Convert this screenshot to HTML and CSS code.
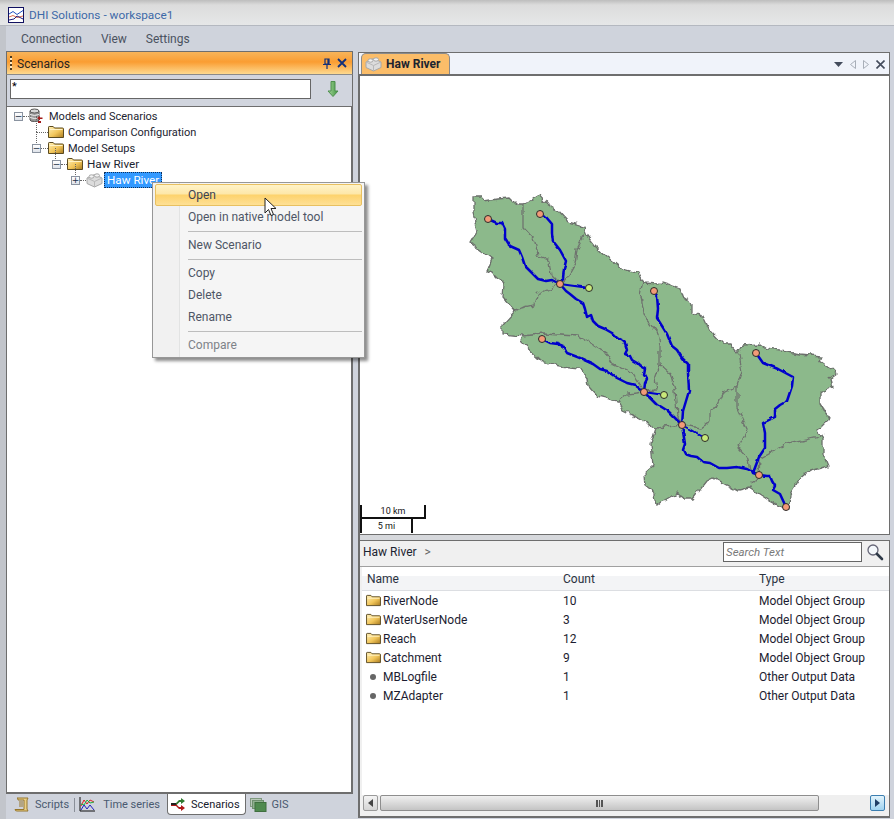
FILE: index.html
```html
<!DOCTYPE html>
<html lang="en">
<head>
  <meta charset="UTF-8">
  <meta name="viewport" content="width=device-width, initial-scale=1.0">
  <title>DHI Solutions - workspace1</title>
  <link rel="stylesheet" href="styles.css">
</head>
<body>
  <!-- shared icons -->
  <svg class="defs" width="0" height="0">
    <defs>
      <linearGradient id="folderFill" x1="0" y1="0" x2="1" y2="1">
        <stop offset="0" stop-color="#fff0b8"/>
        <stop offset="0.55" stop-color="#f2c65a"/>
        <stop offset="1" stop-color="#a87a20"/>
      </linearGradient>
      <linearGradient id="bottleGreen" x1="0" y1="0" x2="1" y2="0">
        <stop offset="0" stop-color="#a6d69a"/>
        <stop offset="1" stop-color="#3f9440"/>
      </linearGradient>
      <symbol id="folder" viewBox="0 0 16 14">
        <path d="M.5 12.500V2.200q0-.7.7-.7h4l1.300 1.500h8q1 0 1 1v8.500z" fill="url(#folderFill)" stroke="#5a4a20"/>
        <path d="M1.500 4.500h13" stroke="#fff3c8" fill="none"/>
      </symbol>
      <symbol id="brick" viewBox="0 0 17 16">
        <path d="M1 6l7.500-3.500L16 6v5.500L8.500 15 1 11.500z" fill="#dcdcdc" stroke="#a8a8a8"/>
        <path d="M1 6l7.500 3.500L16 6M8.500 9.500V15" fill="none" stroke="#b8b8b8"/>
        <ellipse cx="5.500" cy="4.500" rx="2.500" ry="1.700" fill="#f2f2f2" stroke="#a8a8a8"/>
        <ellipse cx="11" cy="3.500" rx="2.500" ry="1.700" fill="#f2f2f2" stroke="#a8a8a8"/>
      </symbol>
    </defs>
  </svg>

  <header class="titlebar">
    <svg class="app-icon" width="16" height="16" viewBox="0 0 16 16">
      <rect x=".5" y=".5" width="15" height="15" fill="#fff" stroke="#101060"/>
      <path d="M1 7l4-2.500 4 3 6-4" fill="none" stroke="#2050c0"/>
      <path d="M1 10l4-1.500 4 2 6-1.500" fill="none" stroke="#e07050"/>
      <path d="M1 13l5-1 3-3 6 3" fill="none" stroke="#202080"/>
    </svg>
    <span class="app-title">DHI Solutions - workspace1</span>
  </header>

  <nav class="menubar">
    <span>Connection</span>
    <span>View</span>
    <span>Settings</span>
  </nav>

  <main class="workspace">
    <section class="left-pane">
      <div class="pane-head">
        <span class="grip"></span>
        <span class="pane-title">Scenarios</span>
        <svg class="pane-btn" width="10" height="11" viewBox="0 0 10 11">
          <path d="M3 1h4v5H3zM1 6.500h8M5 7v4M6 1.500v4.500" fill="none" stroke="#12307a" stroke-width="1.200"/>
        </svg>
        <svg class="pane-btn" width="10" height="10" viewBox="0 0 10 10">
          <path d="M1 1l8 8M9 1l-8 8" fill="none" stroke="#12307a" stroke-width="1.800"/>
        </svg>
      </div>
      <div class="filter-row">
        <input class="filter-input" type="text" value="*">
        <svg class="go-icon" width="12" height="16" viewBox="0 0 12 16">
          <path d="M4 .5h4v9.500h3L6 15.500 1 10h3z" fill="url(#bottleGreen)" stroke="#4d8f4d"/>
        </svg>
      </div>
      <div class="tree">
        <div class="tree-row lvl0">
          <span class="exp">&minus;</span><span class="dots"></span>
          <svg class="tree-icon" width="16" height="16" viewBox="0 0 16 16">
            <path d="M1 3v9q0 1.500 4.500 1.500T10 12V3z" fill="#9a9a9a" stroke="#555"/>
            <ellipse cx="5.500" cy="3" rx="4.500" ry="2" fill="#d8d8d8" stroke="#555"/>
            <path d="M1 6.500q4.500 2 9 0M1 9.500q4.500 2 9 0" fill="none" stroke="#eee"/>
            <path d="M8 10l3-2v1.500h2.500V11H11v1.500zM14 12l-2 2v-1H9v2h3v-1z" fill="#a01818"/>
          </svg>
          <span class="tree-text">Models and Scenarios</span>
        </div>
        <div class="tree-row lvl1 leaf">
          <span class="dots"></span>
          <svg class="tree-icon" width="16" height="14"><use href="#folder"/></svg>
          <span class="tree-text">Comparison Configuration</span>
        </div>
        <div class="tree-row lvl1 has-line">
          <span class="exp">&minus;</span><span class="dots"></span>
          <svg class="tree-icon" width="16" height="14"><use href="#folder"/></svg>
          <span class="tree-text">Model Setups</span>
        </div>
        <div class="tree-row lvl2 has-line">
          <span class="exp">&minus;</span><span class="dots"></span>
          <svg class="tree-icon" width="16" height="14"><use href="#folder"/></svg>
          <span class="tree-text">Haw River</span>
        </div>
        <div class="tree-row lvl3 has-line">
          <span class="exp plus">+</span><span class="dots"></span>
          <svg class="tree-icon" width="17" height="16"><use href="#brick"/></svg>
          <span class="tree-text selected">Haw River</span>
        </div>
      </div>
      <div class="bottom-tabs">
        <span class="btab">
          <svg width="16" height="16" viewBox="0 0 16 16">
            <path d="M3 1h11l-1 2v9l1 2H3q-2 0-2-1.500h9V3H4q0-2-1-2z" fill="#e9cf86" stroke="#96762c"/>
            <path d="M5 5h4M5 7h4M5 9h4" stroke="#96762c"/>
          </svg>
          Scripts
        </span>
        <span class="btab-sep"></span>
        <span class="btab wide-gap">
          <svg width="16" height="15" viewBox="0 0 16 15">
            <path d="M1 0v14h15" fill="none" stroke="#111"/>
            <path d="M2 9l3-6 3 4 3-4 4 2" fill="none" stroke="#e02020"/>
            <path d="M2 7l3 1 3-5 3 3 4-1" fill="none" stroke="#20b040"/>
            <path d="M2 13l3-5 3 4 3-4 4 5" fill="none" stroke="#2020c0"/>
          </svg>
          Time series
        </span>
        <span class="btab active">
          <svg width="16" height="14" viewBox="0 0 16 14">
            <path d="M1 6h5l3-3h2V1l4 3-4 3V5H9.500l-3 3H1z" fill="#2f7a30"/>
            <path d="M1 7h5l3 3h2V8l4 3-4 3v-2H9L6 9H1z" fill="#b01818"/>
            <rect x="1" y="6" width="5" height="2" fill="#222"/>
          </svg>
          Scenarios
        </span>
        <span class="btab">
          <svg width="17" height="14" viewBox="0 0 17 14">
            <rect x=".5" y=".5" width="11" height="8" fill="#b8c8b8" stroke="#7f9a7f"/>
            <rect x="2.500" y="2.500" width="11" height="8" fill="#8fb08f" stroke="#6f8f6f"/>
            <rect x="5" y="4.500" width="11" height="9" fill="#4f8a4f" stroke="#3f6f3f"/>
          </svg>
          GIS
        </span>
      </div>
    </section>

    <section class="right-pane">
      <div class="doc-head">
        <span class="doc-tab">
          <svg width="17" height="16"><use href="#brick"/></svg>
          Haw River
        </span>
        <span class="doc-tools">
          <svg width="9" height="5" viewBox="0 0 9 5"><path d="M0 0h9L4.500 5z" fill="#444c5c"/></svg>
          <svg width="6" height="9" viewBox="0 0 6 9"><path d="M5.500.5v8L.5 4.500z" fill="none" stroke="#a8aeb8"/></svg>
          <svg width="6" height="9" viewBox="0 0 6 9"><path d="M.5.500v8l5-4z" fill="none" stroke="#a8aeb8"/></svg>
          <svg width="9" height="9" viewBox="0 0 9 9"><path d="M.5.500l8 8M8.500.5l-8 8" fill="none" stroke="#444c5c" stroke-width="1.600"/></svg>
        </span>
      </div>

      <div class="map-view">
        <!-- viewBox uses the window's pixels so the traced points stay readable -->
        <svg class="map" width="530" height="458" viewBox="359 75 530 458">
          <defs>
            <filter id="rough" x="-5%" y="-5%" width="110%" height="110%" color-interpolation-filters="sRGB">
              <feTurbulence type="fractalNoise" baseFrequency="0.13" numOctaves="2" seed="4" result="noise"/>
              <feDisplacementMap in="SourceGraphic" in2="noise" scale="7" xChannelSelector="R" yChannelSelector="G"/>
            </filter>
            <filter id="rough2" x="-5%" y="-5%" width="110%" height="110%" color-interpolation-filters="sRGB">
              <feTurbulence type="fractalNoise" baseFrequency="0.16" numOctaves="1" seed="9" result="noise"/>
              <feDisplacementMap in="SourceGraphic" in2="noise" scale="3" xChannelSelector="R" yChannelSelector="G"/>
            </filter>
          </defs>
          <g filter="url(#rough)">
            <path class="basin" d="M473 195L482 195 484 200 497 198 510 197 517 204 523 204 532 199 540 194 547 203 558 210 568 221 583 225 587 235 595 245 607 256 622 268 638 272 643 282 660 283 662 281 680 287 683 297 692 303 692 312 703 315 710 330 722 343 730 343 738 352 743 344 760 343 767 348 800 353 822 355 820 360 837 372 830 377 832 387 820 392 820 403 830 417 817 430 823 437 823 453 828 465 810 470 798 480 790 493 789 507 785 508 770 500 750 487 738 490 713 477 707 480 693 498 685 498 677 492 663 500 657 505 655 493 645 485 644 473 653 465 651 443 656 427 640 418 623 410 618 400 597 395 588 385 587 377 580 367 560 365 543 362 520 340 522 335 503 333 503 323 515 310 502 295 503 283 488 268 492 258 470 242 477 230 473 213z"/>
            <path class="divide" d="M523 204L523 227 535 240 538 255 550 260 552 275 560 283M585 233L577 248 575 263 567 277 560 283M560 283L537 293 534 304 517 308 515 310M522 335L543 333 578 335 607 353 613 363 633 372 644 391M618 400L627 393 644 391M643 282L640 295 643 313 658 332 660 343 660 363 670 372 675 390 677 413 682 424M660 363L655 377 657 390 644 391M739 353L742 370 737 385 723 392 717 405 710 410 710 420 700 427 682 424M737 385L737 407 748 430 738 447 748 458 750 470 759 474M759 474L760 458 787 443 815 437 822 433M759 474L750 483M682 424L656 427"/>
          </g>
          <g filter="url(#rough2)">
            <path class="river" d="M488 218L497 222 502 222 505 228 505 237 510 245 519 249 522 256 525 265 531 271 538 278 546 280 552 279 560 283M540 213L546 216 552 223 552 232 553 240 560 249 566 260 564 268 563 277 560 283M560 283L566 290 570 293 576 298 583 302 585 308 587 316 591 314 593 320 598 325 605 328 612 332 617 337 623 340 625 342 627 349 625 353 630 355 632 359 637 362 640 365 645 368 644 374 647 378 645 382 644 391 650 397 656 403 660 405 668 410 682 424M542 338L550 342 558 343 563 345 567 352 580 357 593 363 600 368 607 370 617 377 627 382 635 384 644 391M654 290L657 295 658 308 657 317 662 325 667 333 669 338 672 345 677 349 682 357 688 363 688 372 689 390 686 400 683 410 682 424M682 424L685 443 683 449 685 453 691 455 697 456 703 461 710 462 719 467 727 467 737 466 747 468 759 474M756 352L763 362 778 368 793 376 792 385 787 400 780 404 775 408 775 416 769 419 763 422 765 432 765 447 759 456 753 472 759 474M759 474L767 475 770 475 772 480 775 485 773 489 780 493 786 506"/>
            <path class="river thin" d="M560 283L589 287M644 391L664 394M682 424L705 437"/>
          </g>
          <g class="node">
            <circle cx="488" cy="218" r="3.500"/><circle cx="540" cy="213" r="3.500"/>
            <circle cx="560" cy="283" r="3.500"/><circle cx="654" cy="290" r="3.500"/>
            <circle cx="542" cy="338" r="3.500"/><circle cx="756" cy="352" r="3.500"/>
            <circle cx="644" cy="391" r="3.500"/><circle cx="682" cy="424" r="3.500"/>
            <circle cx="759" cy="474" r="3.500"/><circle cx="786" cy="506" r="3.500"/>
          </g>
          <g class="node user">
            <circle cx="589" cy="287" r="3.500"/><circle cx="664" cy="394" r="3.500"/>
            <circle cx="705" cy="437" r="3.500"/>
          </g>
        </svg>
        <div class="scalebar">
          <div class="scale-km">10 km</div>
          <div class="scale-mi">5 mi</div>
        </div>
      </div>

      <div class="splitter"></div>

      <div class="lower">
        <div class="crumb-bar">
          <span class="crumb">Haw River</span>
          <span class="crumb-arrow">&gt;</span>
          <input class="search-input" type="text" placeholder="Search Text">
          <svg class="search-icon" width="18" height="18" viewBox="0 0 18 18">
            <circle cx="7" cy="7" r="5" fill="#f4f8fb" stroke="#667"  stroke-width="1.300"/>
            <path d="M11 11l5 5" stroke="#2f3a48" stroke-width="2.600" stroke-linecap="round"/>
          </svg>
        </div>
        <div class="list">
          <div class="list-row list-head">
            <span>Name</span><span>Count</span><span>Type</span>
          </div>
          <div class="list-row">
            <span class="name-cell"><svg width="15" height="13"><use href="#folder"/></svg>RiverNode</span>
            <span>10</span><span>Model Object Group</span>
          </div>
          <div class="list-row">
            <span class="name-cell"><svg width="15" height="13"><use href="#folder"/></svg>WaterUserNode</span>
            <span>3</span><span>Model Object Group</span>
          </div>
          <div class="list-row">
            <span class="name-cell"><svg width="15" height="13"><use href="#folder"/></svg>Reach</span>
            <span>12</span><span>Model Object Group</span>
          </div>
          <div class="list-row">
            <span class="name-cell"><svg width="15" height="13"><use href="#folder"/></svg>Catchment</span>
            <span>9</span><span>Model Object Group</span>
          </div>
          <div class="list-row">
            <span class="name-cell"><i class="dot"></i>MBLogfile</span>
            <span>1</span><span>Other Output Data</span>
          </div>
          <div class="list-row">
            <span class="name-cell"><i class="dot"></i>MZAdapter</span>
            <span>1</span><span>Other Output Data</span>
          </div>
        </div>
        <div class="hscroll">
          <span class="sb-btn"><svg width="5" height="8" viewBox="0 0 5 8"><path d="M5 0v8L0 4z" fill="#444"/></svg></span>
          <span class="sb-thumb"><i></i><i></i><i></i></span>
          <span class="sb-btn hot"><svg width="5" height="8" viewBox="0 0 5 8"><path d="M0 0v8l5-4z" fill="#1f3f66"/></svg></span>
        </div>
      </div>
    </section>
  </main>

  <!-- context menu and pointer lie over the panes -->
  <div class="ctx-menu">
    <div class="ctx-item current">Open</div>
    <div class="ctx-item">Open in native model tool</div>
    <div class="ctx-sep"></div>
    <div class="ctx-item">New Scenario</div>
    <div class="ctx-sep"></div>
    <div class="ctx-item">Copy</div>
    <div class="ctx-item">Delete</div>
    <div class="ctx-item">Rename</div>
    <div class="ctx-sep"></div>
    <div class="ctx-item disabled">Compare</div>
  </div>
  <svg class="pointer" width="14" height="20" viewBox="0 0 14 20">
    <path d="M1 1v15l3.500-3.500 2.500 6 2.500-1-2.500-6h5z" fill="#fff" stroke="#222"/>
  </svg>
</body>
</html>
```

FILE: styles.css
```css
* {
  box-sizing: border-box;
}
html, body {
  margin: 0;
  height: 100%;
}
body {
  width: 894px;
  height: 819px;
  overflow: hidden;
  position: relative;
  display: flex;
  flex-direction: column;
  background: #cfd3dc;
  font-family: Roboto, "Noto Sans", sans-serif;
  font-size: 12px;
  color: #1c2430;
}
.defs {
  position: absolute;
}

/* title and menu */
.titlebar {
  height: 26px;
  display: flex;
  align-items: center;
  gap: 5px;
  padding: 4px 0 0 8px;
  background: linear-gradient(#bdbdbd, #dcdcdc 20%, #e6e7e8);
  border-bottom: 1px solid #b4b8c0;
}
.app-title {
  font-size: 11.8px;
  color: #3d69a8;
}
.menubar {
  height: 25px;
  display: flex;
  align-items: center;
  gap: 19px;
  padding-left: 15px;
  font-size: 12px;
  color: #4a5260;
  border-left: 6px solid #c2c5cb;
}
.workspace {
  flex: 1;
  display: flex;
  min-height: 0;
  border-left: 6px solid #c2c5cb;
}

/* left docked pane */
.left-pane {
  width: 347px;
  display: flex;
  flex-direction: column;
}
.pane-head {
  height: 24px;
  display: flex;
  align-items: center;
  gap: 5px;
  padding: 0 5px 0 3px;
  background: linear-gradient(#f7b45a, #fa9d32 45%, #fdd98f);
  border: 1px solid #6e6e6e;
  border-bottom-color: #8a8a8a;
}
.grip {
  width: 2px;
  height: 14px;
  background: repeating-linear-gradient(#4a3a20 0 2px, #ffe9c0 2px 4px);
}
.pane-title {
  flex: 1;
  padding-top: 1px;
  font-size: 12px;
  color: #2a2420;
}
.filter-row {
  height: 31px;
  display: flex;
  align-items: center;
  justify-content: space-between;
  padding: 0 13px 3px 3px;
  background: #d1d5de;
  border-left: 1px solid #6e6e6e;
  border-right: 1px solid #6e6e6e;
}
.filter-input {
  width: 301px;
  height: 20px;
  border: 1px solid #666;
  background: #fff;
  font: 11px Roboto, sans-serif;
  padding: 0 0 6px 1px;
  outline: none;
}
.tree {
  flex: 1;
  padding-top: 1px;
  background: #fff;
  border: 1px solid #6e6e6e;
  border-width: 1px 2px 2px 1px;
  font-size: 11px;
}
.tree-row {
  height: 16px;
  display: flex;
  align-items: center;
  position: relative;
}
.lvl0 { padding-left: 7px; }
.lvl1 { padding-left: 25px; }
.lvl2 { padding-left: 45px; font-size: 11.7px; }
.lvl3 { padding-left: 64px; font-size: 11.7px; }
.leaf { padding-left: 29px; }
.exp {
  width: 9px;
  height: 9px;
  flex: none;
  display: flex;
  align-items: center;
  justify-content: center;
  border: 1px solid #8a93a0;
  background: linear-gradient(#fff, #dfe3ea);
  font: 9px/7px "DejaVu Sans", sans-serif;
  color: #20304a;
  position: relative;
  z-index: 1;
}
.dots {
  width: 6px;
  flex: none;
  border-top: 1px dotted #666;
}
.lvl1 .dots {
  width: 7px;
}
.leaf .dots {
  width: 12px;
}
.tree-icon {
  flex: none;
  margin-right: 4px;
}
.has-line::before,
.leaf::before {
  content: "";
  position: absolute;
  top: -8px;
  height: 13px;
  border-left: 1px dotted #666;
}
.leaf::before { left: 29px; height: 16px; }
.lvl1.has-line::before { left: 29px; }
.lvl2.has-line::before { left: 48px; }
.lvl3.has-line::before { left: 68px; }
.tree-text {
  white-space: nowrap;
}
.selected {
  height: 16px;
  line-height: 14px;
  margin-left: -3px;
  padding: 0 2px;
  background: #3399ff;
  color: #fff;
  border: 1px dotted #10305a;
}
.bottom-tabs {
  height: 25px;
  display: flex;
  align-items: flex-start;
  padding: 0 0 0 8px;
  font-size: 11px;
  color: #4a5a70;
}
.btab {
  display: flex;
  align-items: center;
  gap: 5px;
  height: 21px;
  padding: 0 4px 0 0;
}
.btab.wide-gap {
  gap: 8px;
  padding-right: 3px;
}
.btab-sep {
  width: 1px;
  height: 14px;
  margin: 4px 4px 0 1px;
  background: #8a8f98;
}
.btab.active {
  margin-left: 4px;
  margin-right: 4px;
  padding: 0 5px 0 2px;
  background: #fff;
  color: #16202c;
  border: 1px solid #6e6e6e;
  border-top: none;
  border-radius: 0 0 4px 4px;
}

/* right document pane */
.right-pane {
  width: 532px;
  margin-left: 5px;
  display: flex;
  flex-direction: column;
}
.doc-head {
  height: 24px;
  margin-top: 1px;
  display: flex;
  justify-content: space-between;
  align-items: flex-end;
  padding-left: 2px;
  background: #f0f3fa;
  border: 1px solid #6e6e6e;
  border-bottom-width: 2px;
}
.doc-tab {
  height: 21px;
  width: 89px;
  display: flex;
  align-items: center;
  gap: 4px;
  padding-left: 3px;
  background: #fbbd69;
  border: 1px solid #8a8a8a;
  border-bottom: none;
  border-radius: 5px 5px 0 0;
  font-weight: 700;
  font-size: 12px;
  color: #1c2430;
}
.doc-tools {
  display: flex;
  align-items: center;
  gap: 7px;
  height: 20px;
  padding-right: 4px;
}
.map-view {
  height: 458px;
  position: relative;
  background: #fff;
  border-left: 2px solid #6e6e6e;
  border-right: 1px solid #6e6e6e;
  overflow: hidden;
}
.map {
  display: block;
  margin-left: -1px;
}
.basin {
  fill: #8cb98b;
  stroke: #6b6f6b;
  stroke-width: 1.3;
}
.divide {
  fill: none;
  stroke: #6f736f;
  stroke-width: 1.3;
}
.river {
  fill: none;
  stroke: #0000cc;
  stroke-width: 2.5;
  stroke-linejoin: round;
}
.river.thin {
  stroke-width: 2;
}
.node circle {
  fill: #f29a78;
  stroke: #2a2a2a;
  stroke-width: 1;
}
.node.user circle {
  fill: #c8e87a;
}
.scalebar {
  position: absolute;
  left: 0;
  bottom: 1px;
  font-size: 9px;
  color: #111;
  text-align: center;
}
.scale-km {
  width: 66px;
  height: 14px;
  line-height: 12px;
  border-right: 2px solid #111;
  border-bottom: 2px solid #111;
  border-left: 2px solid #111;
}
.scale-mi {
  width: 53px;
  height: 14px;
  line-height: 15px;
  border-right: 2px solid #111;
  border-left: 2px solid #111;
}
.splitter {
  height: 7px;
  flex: none;
  background: #d6d8dc;
  border-top: 1px solid #6e6e6e;
  border-bottom: 1px solid #6e6e6e;
  border-left: 2px solid #6e6e6e;
}
.lower {
  flex: 1;
  display: flex;
  flex-direction: column;
  min-height: 0;
  margin-bottom: 1px;
  padding-bottom: 5px;
  background: #f0f0f0;
  border-left: 2px solid #6e6e6e;
  border-right: 1px solid #6e6e6e;
  border-bottom: 2px solid #6e6e6e;
}
.crumb-bar {
  height: 26px;
  flex: none;
  display: flex;
  align-items: center;
  padding: 0 5px 4px 3px;
  background: #f0f0f0;
  border-bottom: 1px solid #a0a0a0;
  font-size: 12px;
}
.crumb-arrow {
  margin-left: 8px;
  color: #666;
  flex: 1;
}
.search-input {
  width: 139px;
  height: 20px;
  padding: 0 2px;
  border: 1px solid #666;
  background: #fff;
  font: italic 11.5px Roboto, sans-serif;
  outline: none;
}
.search-input::placeholder {
  color: #7a7a7a;
}
.search-icon {
  margin-left: 4px;
}
.list {
  flex: 1;
  margin-left: 2px;
  background: #fff;
}
.list-row {
  height: 19px;
  display: grid;
  grid-template-columns: 197px 196px 1fr;
  align-items: center;
  padding-left: 4px;
  color: #1c1c30;
  white-space: nowrap;
}
.list-head {
  height: 24px;
  padding-top: 1px;
  color: #2a3240;
  border-bottom: 1px solid #dcdee2;
  background-image: linear-gradient(#fff 40%, #f3f4f6 40%),
    linear-gradient(#dcdee2, #dcdee2),
    linear-gradient(#dcdee2, #dcdee2);
  background-size: 100% 100%, 1px 100%, 1px 100%;
  background-position: 0 0, 194px 0, 390px 0;
  background-repeat: no-repeat;
}
.list-head span:first-child {
  padding-left: 1px;
}
.name-cell {
  display: flex;
  align-items: center;
  gap: 2px;
}
.dot {
  width: 6px;
  height: 6px;
  margin: 0 5px 0 4px;
  border-radius: 50%;
  background: #666;
}
.hscroll {
  height: 16px;
  margin-left: 2px;
  flex: none;
  display: flex;
  align-items: stretch;
  padding: 0 4px 0 1px;
  background: #efefef;
}
.sb-btn {
  width: 15px;
  display: flex;
  align-items: center;
  justify-content: center;
  border: 1px solid #9a9a9a;
  border-radius: 2px;
  background: linear-gradient(#f4f4f4, #d4d4d4);
}
.sb-btn.hot {
  margin-left: 51px;
  border-color: #3c7fb1;
  background: linear-gradient(#e3f4fc, #9fd3f0);
}
.sb-thumb {
  flex: 1;
  margin-left: 2px;
  display: flex;
  align-items: center;
  justify-content: center;
  gap: 1px;
  border: 1px solid #8e8e8e;
  border-radius: 2px;
  background: linear-gradient(#f0f0f0, #c4c4c4);
}
.sb-thumb i {
  width: 1.5px;
  height: 7px;
  background: #555;
}

/* context menu over the tree */
.ctx-menu {
  position: absolute;
  left: 152px;
  top: 182px;
  width: 213px;
  height: 176px;
  padding: 1px 2px;
  border: 1px solid #979797;
  background: linear-gradient(90deg, #f1f1f1 26px, #e2e3e3 26px, #e2e3e3 27px, #f5f5f5 27px);
  box-shadow: 3px 3px 3px rgba(0, 0, 0, 0.45);
  font-size: 12px;
  color: #4e5666;
}
.ctx-item {
  height: 22px;
  line-height: 23px;
  padding-left: 33px;
}
.ctx-item.current {
  background: linear-gradient(#fff3c8, #fde7a8 45%, #fdd26c 50%, #fee095);
  border: 1px solid #e8c060;
  border-radius: 2px;
  line-height: 21px;
  padding-left: 32px;
  color: #3c4452;
}
.ctx-item.disabled {
  color: #7e8288;
}
.ctx-sep {
  height: 6px;
  margin-left: 33px;
  background: linear-gradient(#bdbdbd, #bdbdbd) center / 100% 1px no-repeat;
}
.pointer {
  position: absolute;
  left: 264px;
  top: 197px;
}
```
